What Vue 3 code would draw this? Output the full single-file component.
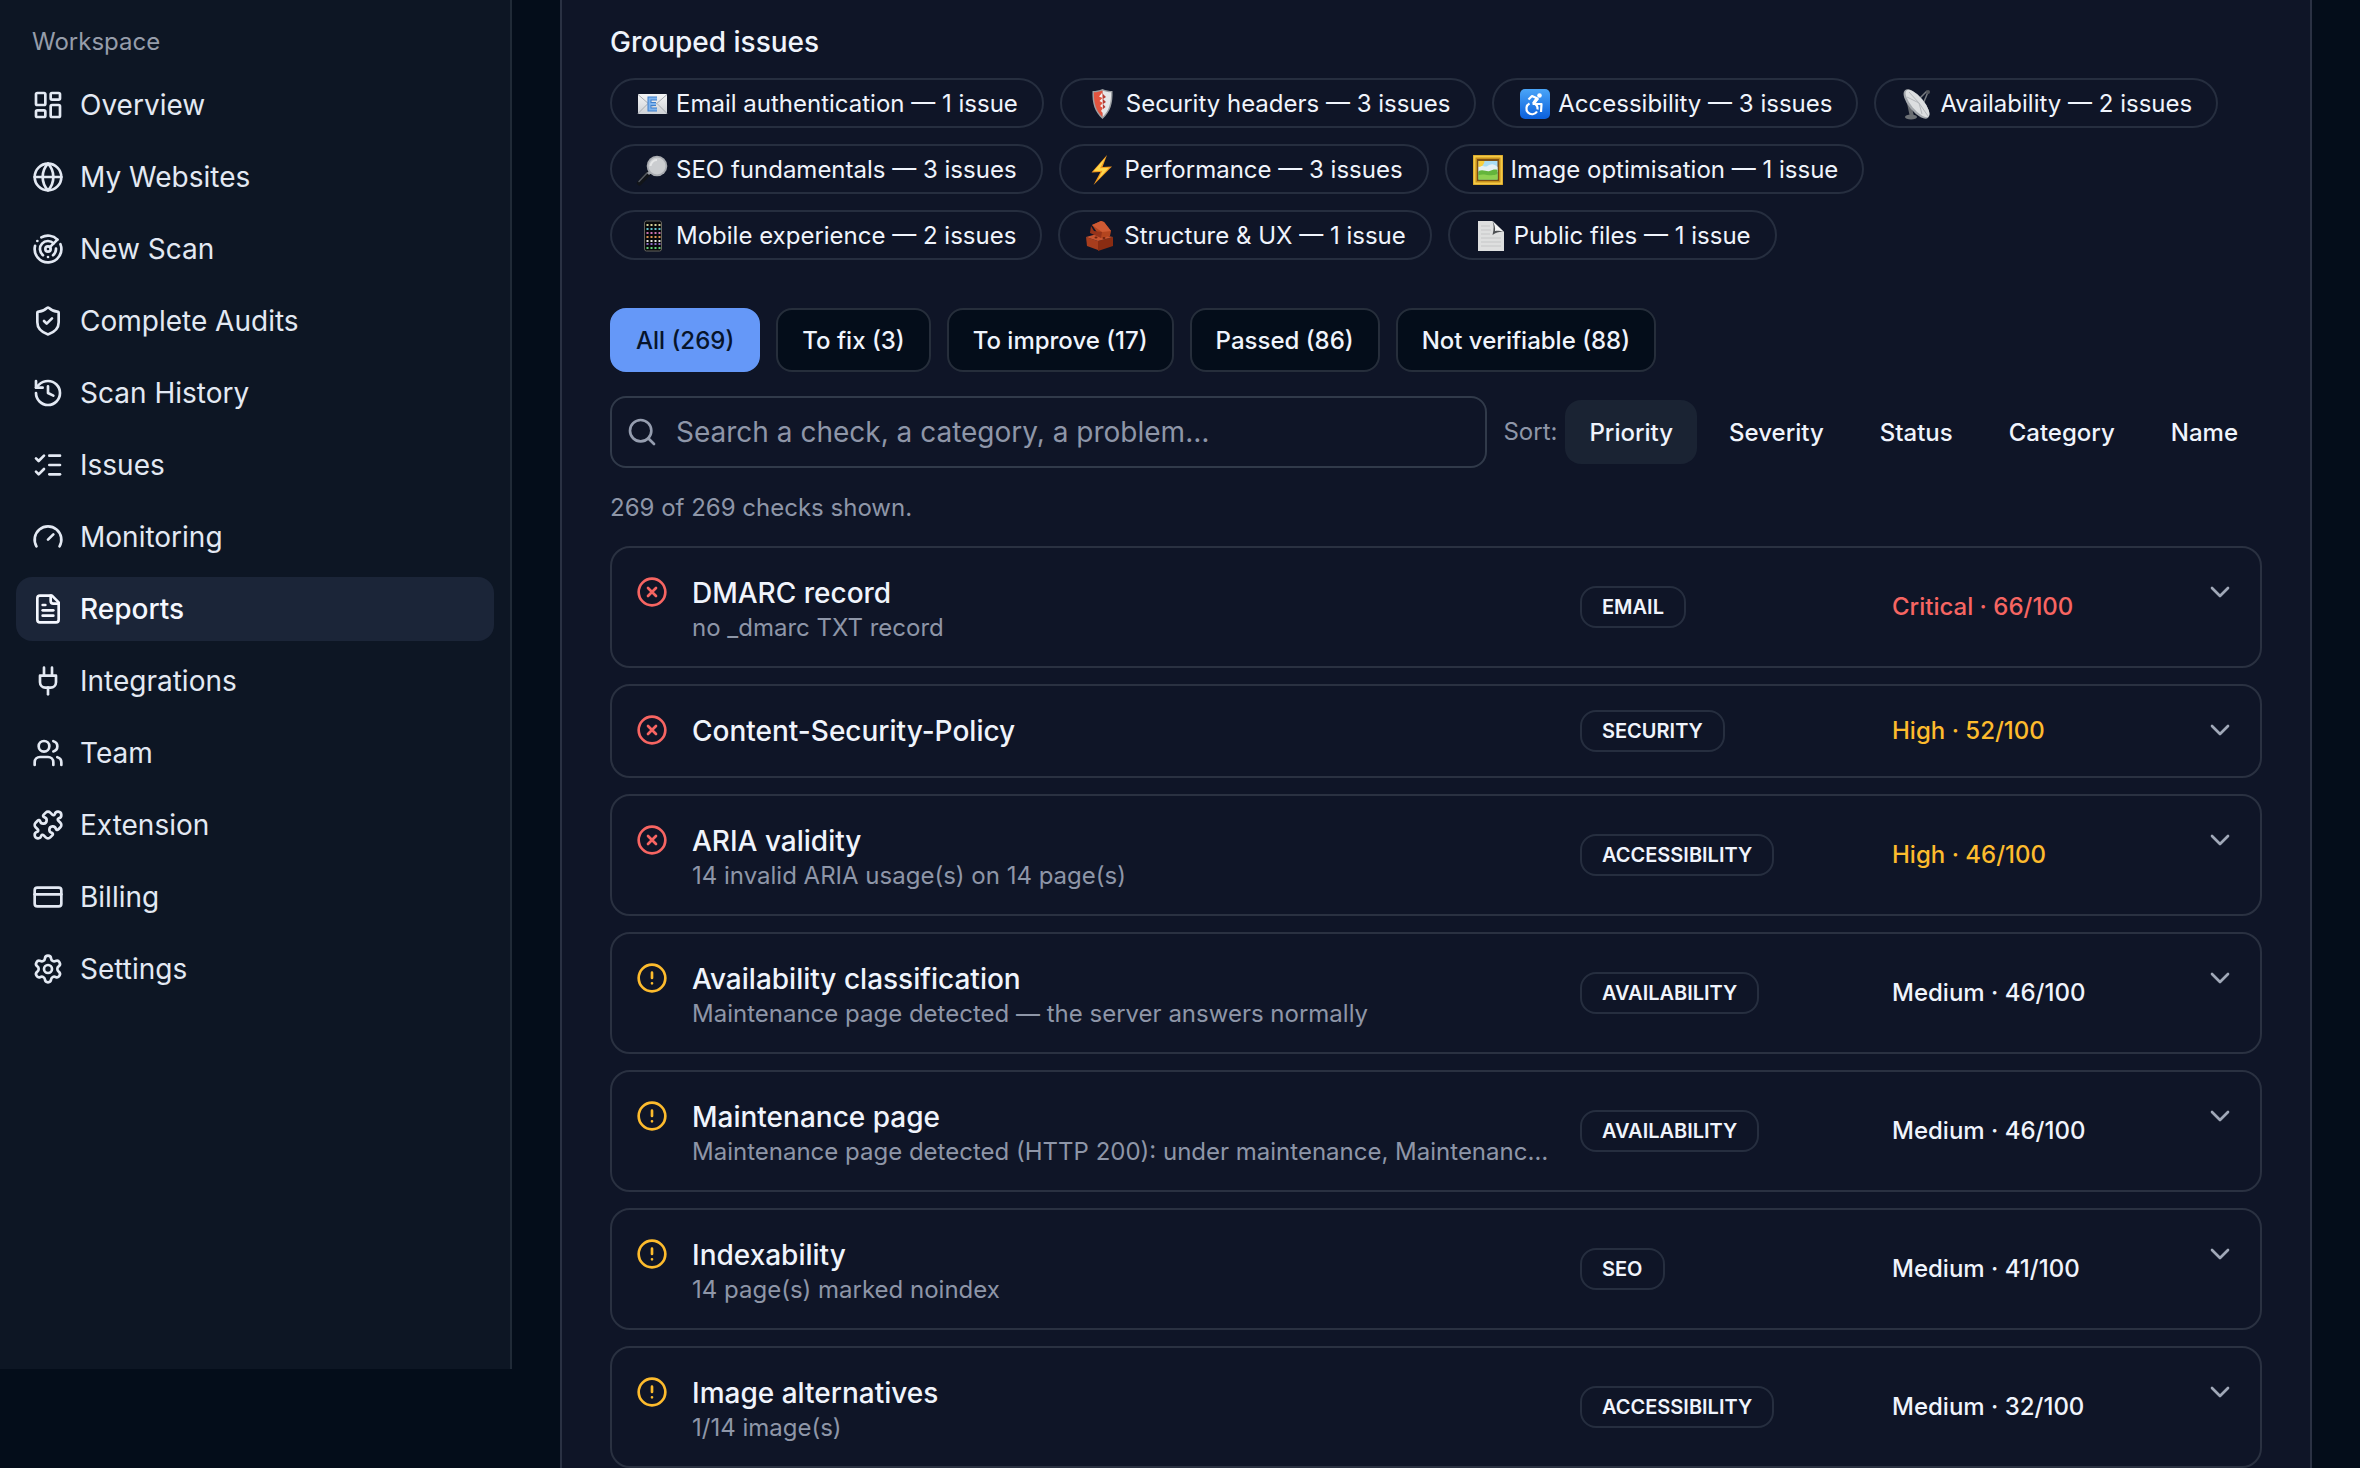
<script setup>
import { ref } from 'vue'

const navItems = [
  { label: 'Overview', shapes: '<rect width="7" height="9" x="3" y="3" rx="1"/><rect width="7" height="5" x="14" y="3" rx="1"/><rect width="7" height="9" x="14" y="12" rx="1"/><rect width="7" height="5" x="3" y="16" rx="1"/>' },
  { label: 'My Websites', shapes: '<circle cx="12" cy="12" r="10"/><path d="M12 2a14.5 14.5 0 0 0 0 20 14.5 14.5 0 0 0 0-20"/><path d="M2 12h20"/>' },
  { label: 'New Scan', shapes: '<path d="M19.07 4.93A10 10 0 0 0 6.99 3.34"/><path d="M4 6h.01"/><path d="M2.29 9.62A10 10 0 1 0 21.31 8.35"/><path d="M16.24 7.76A6 6 0 1 0 8.23 16.67"/><path d="M12 18h.01"/><path d="M17.99 11.66A6 6 0 0 1 15.77 16.67"/><circle cx="12" cy="12" r="2"/><path d="m13.41 10.59 5.66-5.66"/>' },
  { label: 'Complete Audits', shapes: '<path d="M20 13c0 5-3.5 7.5-7.66 8.95a1 1 0 0 1-.67-.01C7.5 20.5 4 18 4 13V6a1 1 0 0 1 1-1c2 0 4.5-1.2 6.24-2.72a1.17 1.17 0 0 1 1.52 0C14.51 3.81 17 5 19 5a1 1 0 0 1 1 1z"/><path d="m9 12 2 2 4-4"/>' },
  { label: 'Scan History', shapes: '<path d="M3 12a9 9 0 1 0 9-9 9.75 9.75 0 0 0-6.74 2.74L3 8"/><path d="M3 3v5h5"/><path d="M12 7v5l4 2"/>' },
  { label: 'Issues', shapes: '<path d="M13 5h8"/><path d="M13 12h8"/><path d="M13 19h8"/><path d="m3 17 2 2 4-4"/><path d="m3 7 2 2 4-4"/>' },
  { label: 'Monitoring', shapes: '<path d="m12 14 4-4"/><path d="M3.34 19a10 10 0 1 1 17.32 0"/>' },
  { label: 'Reports', active: true, shapes: '<path d="M15 2H6a2 2 0 0 0-2 2v16a2 2 0 0 0 2 2h12a2 2 0 0 0 2-2V7Z"/><path d="M14 2v4a2 2 0 0 0 2 2h4"/><path d="M10 9H8"/><path d="M16 13H8"/><path d="M16 17H8"/>' },
  { label: 'Integrations', shapes: '<path d="M12 22v-5"/><path d="M9 8V2"/><path d="M15 8V2"/><path d="M18 8v5a4 4 0 0 1-4 4h-4a4 4 0 0 1-4-4V8Z"/>' },
  { label: 'Team', shapes: '<path d="M16 21v-2a4 4 0 0 0-4-4H6a4 4 0 0 0-4 4v2"/><circle cx="9" cy="7" r="4"/><path d="M22 21v-2a4 4 0 0 0-3-3.87"/><path d="M16 3.13a4 4 0 0 1 0 7.75"/>' },
  { label: 'Extension', shapes: '<path d="M15.39 4.39a1 1 0 0 0 1.68-.474 2.5 2.5 0 1 1 3.014 3.015 1 1 0 0 0-.474 1.68l1.683 1.682a2.414 2.414 0 0 1 0 3.414L19.61 15.39a1 1 0 0 1-1.68-.474 2.5 2.5 0 1 0-3.014 3.015 1 1 0 0 1 .474 1.68l-1.683 1.682a2.414 2.414 0 0 1-3.414 0L8.61 19.61a1 1 0 0 0-1.68.474 2.5 2.5 0 1 1-3.014-3.015 1 1 0 0 0 .474-1.68l-1.683-1.682a2.414 2.414 0 0 1 0-3.414L4.39 8.61a1 1 0 0 1 1.68.474 2.5 2.5 0 1 0 3.014-3.015 1 1 0 0 1-.474-1.68l1.683-1.682a2.414 2.414 0 0 1 3.414 0z"/>' },
  { label: 'Billing', shapes: '<rect width="20" height="14" x="2" y="5" rx="2"/><path d="M2 10h20"/>' },
  { label: 'Settings', shapes: '<path d="M9.671 4.136a2.34 2.34 0 0 1 4.659 0 2.34 2.34 0 0 0 3.319 1.915 2.34 2.34 0 0 1 2.33 4.033 2.34 2.34 0 0 0 0 3.831 2.34 2.34 0 0 1-2.33 4.033 2.34 2.34 0 0 0-3.319 1.915 2.34 2.34 0 0 1-4.659 0 2.34 2.34 0 0 0-3.32-1.915 2.34 2.34 0 0 1-2.33-4.033 2.34 2.34 0 0 0 0-3.831A2.34 2.34 0 0 1 6.35 6.051a2.34 2.34 0 0 0 3.319-1.915"/><circle cx="12" cy="12" r="3"/>' }
]

const groups = [
  { label: 'Email authentication — 1 issue', art: '<defs><linearGradient id="env" x2="0" y2="1"><stop stop-color="#f4f5f6"/><stop offset="1" stop-color="#cfd2d6"/></linearGradient></defs><rect x="2" y="6" width="29" height="20" rx="1" fill="url(#env)"/><path d="M2 6.500 14 17q2.500 2 5 0L31 6.500M2 25.500l10-10M31 25.500l-10-10" fill="none" stroke="#a9adb3"/><path d="M21 10.500h-7.500v11H21M13.500 16H20" fill="none" stroke="#3f7fcb" stroke-width="4"/><path d="M21 10.500h-7.500v11H21M13.500 16H20" fill="none" stroke="#7fb4ee" stroke-width="2"/>' },
  { label: 'Security headers — 3 issues', art: '<path d="M16.500 1c3.500 1.500 6.500 2 10 2 .5 12-2 21-10 28C8.500 24 6 15 6.500 3c3.500 0 6.500-.5 10-2z" fill="#9b9ea2"/><path d="M16.500 2.500c3 1.200 5.500 1.700 8.600 1.800.2 10.500-2 18.500-8.600 24.700z" fill="#e6e7e9"/><path d="M16.500 2.500c-3 1.200-5.500 1.700-8.600 1.800-.2 10.500 2 18.500 8.600 24.700z" fill="#e2543f"/><path d="m16 5-3 3.500 3.500 1.500-3 3 3.500 2-3 3 3 2-2 3 2 2z" fill="#f3f3f4"/><path d="m17 6 3 3-3 2 3 3-3 2 2.500 3-2.500 2z" fill="#b83a31"/>' },
  { label: 'Accessibility — 3 issues', art: '<defs><linearGradient id="acc" x2="0" y2="1"><stop stop-color="#4aa5f8"/><stop offset="1" stop-color="#0a5fdb"/></linearGradient></defs><rect x="2" y="1" width="30" height="30" rx="5" fill="url(#acc)"/><circle cx="21.500" cy="7.500" r="2.300" fill="#fff"/><g fill="none" stroke="#fff" stroke-width="2.200" stroke-linejoin="round"><path d="M10.500 11.500 14 8l5.500 2.500-4 5.500h8l-.5 8"/><path d="M11.500 15.500a5.700 5.700 0 1 0 7.500 8"/><path d="M16 15.500a5.700 5.700 0 0 1 3.500 6"/></g><path d="m18 9 3 2-4 5-3-1z" fill="#fff"/>' },
  { label: 'Availability — 2 issues', art: '<path d="m18 12 9-9M23 16l5-12" stroke="#777b80" stroke-width="1.500"/><circle cx="28" cy="4" r="2" fill="#54575c"/><path d="m9 15 3 14" stroke="#686b70" stroke-width="4"/><ellipse cx="11" cy="29" rx="6" ry="2.500" fill="#6c7075"/><ellipse cx="16.500" cy="16" rx="18" ry="7.500" transform="rotate(50 16.500 16)" fill="#a4a8ad"/><ellipse cx="17.500" cy="15.500" rx="17" ry="6.200" transform="rotate(50 17.500 15.500)" fill="#dcdee0"/><path d="m9 4 10 11 9 13M7 9l12 6 3 11" stroke="#b5b8bc" fill="none"/>' },
  { label: 'SEO fundamentals — 3 issues', art: '<path d="m3.500 29 9-9.500" stroke="#111419" stroke-width="5" stroke-linecap="round"/><path d="m3 27.500 8-8.500" stroke="#555960" stroke-width="1.500" stroke-linecap="round"/><path d="m12 20 3-3" stroke="#9a9da2" stroke-width="3"/><circle cx="21" cy="12" r="10.300" fill="#a9acb1"/><circle cx="21" cy="12" r="8.500" fill="#cbcdd0"/><path d="M14.500 12a6.500 6.500 0 0 1 6.500-6" stroke="#e6e7e8" stroke-width="2" fill="none"/>' },
  { label: 'Performance — 3 issues', art: '<path d="M22 1 6.500 18.500l9-.5L8.500 31 27 12.500l-9.500.5z" fill="#f49a1f"/><path d="M20.500 3.500 8.500 17.200l9-.5-5 9.500L24 13.800l-9 .4z" fill="#ffd84d"/>' },
  { label: 'Image optimisation — 1 issue', art: '<rect x="2" y="1" width="30" height="30" fill="#c8901c"/><rect x="3.500" y="2.500" width="27" height="27" fill="none" stroke="#f4ca45" stroke-width="2"/><rect x="6" y="5" width="22" height="22" fill="#7c4f12"/><rect x="7.500" y="7" width="19" height="18.500" fill="#a9dcf3"/><path d="M7.500 13c4-3 6 1 9-1s6-3 10 1v5h-19z" fill="#e6f0f2"/><path d="M7.500 7h6a6 6 0 0 1-6 6z" fill="#f9cf3b"/><path d="M7.500 17c5-2 8 1 11 0s5-2 8-1v9.500h-19z" fill="#64b53c"/><path d="M7.500 21c6-2 12 2 19-1v5.500h-19z" fill="#8fd152"/>' },
  { label: 'Mobile experience — 2 issues', art: '<rect x="8.500" y="1" width="17" height="30" rx="2" fill="#08090b" stroke="#65645c"/><g stroke-width="2" stroke-dasharray="2 2"><path d="M10.500 5h14" stroke="#d7d29a"/><path d="M10.500 9h14" stroke="#62c3cd"/><path d="M10.500 13h14" stroke="#cf73b4"/><path d="M10.500 17h14" stroke="#e29554"/><path d="M10.500 21h14" stroke="#e8e8df"/><path d="M10.500 24h14" stroke="#8a6cc4"/><path d="M10.500 28h14" stroke="#63d07a"/></g>' },
  { label: 'Structure & UX — 1 issue', art: '<path d="M2 17 14 21v9L3 26z" fill="#a83d1d"/><path d="m14 21 15-4v9l-15 5z" fill="#8a2c12"/><path d="m2 17 11-3 16 3-15 4z" fill="#c95530"/><path d="M8 5 17 1l3 1 7 9-1 5-9 2z" fill="#b4451f"/><path d="m8 5 9-4 3 1 7 9-9 1z" fill="#cf5a33"/><path d="m7 6 3 5 8 1-1 6-11-5z" fill="#96331a"/><ellipse cx="12" cy="17.500" rx="1.500" ry="1" fill="#6d220e"/><ellipse cx="20" cy="18" rx="1.500" ry="1" fill="#6d220e"/>' },
  { label: 'Public files — 1 issue', art: '<path d="M4 1h14.500L30 12v19H4z" fill="#dedfdf"/><path d="M18.500 1c1.500 4 1.500 8 0 14 4-3 8-3.500 11.500-3z" fill="#4e5154"/><path d="M18.500 1 30 12c-4-1.500-7-1.500-9-1 .5-3-.5-7-2.500-10z" fill="#f5f5f5"/><path d="M7 6h9M7 10h10M7 14h9M7 18h20M7 22h20M7 26h20" stroke="#c5c6c7"/>' }
]

const filters = ['All (269)', 'To fix (3)', 'To improve (17)', 'Passed (86)', 'Not verifiable (88)']
const sorts = ['Priority', 'Severity', 'Status', 'Category', 'Name']

const checks = [
  { title: 'DMARC record', note: 'no _dmarc TXT record', category: 'Email', level: 'critical', score: 'Critical · 66/100', failed: true },
  { title: 'Content-Security-Policy', note: '', category: 'Security', level: 'high', score: 'High · 52/100', failed: true },
  { title: 'ARIA validity', note: '14 invalid ARIA usage(s) on 14 page(s)', category: 'Accessibility', level: 'high', score: 'High · 46/100', failed: true },
  { title: 'Availability classification', note: 'Maintenance page detected — the server answers normally', category: 'Availability', level: 'medium', score: 'Medium · 46/100' },
  { title: 'Maintenance page', note: 'Maintenance page detected (HTTP 200): under maintenance, Maintenanc…', category: 'Availability', level: 'medium', score: 'Medium · 46/100' },
  { title: 'Indexability', note: '14 page(s) marked noindex', category: 'SEO', level: 'medium', score: 'Medium · 41/100' },
  { title: 'Image alternatives', note: '1/14 image(s)', category: 'Accessibility', level: 'medium', score: 'Medium · 32/100' }
]

const activeFilter = ref('All (269)')
const activeSort = ref('Priority')
const query = ref('')
</script>

<template>
  <div class="app">
    <aside class="sidebar">
      <p class="sidebar-title">Workspace</p>
      <nav class="nav">
        <a v-for="item in navItems" :key="item.label" href="#" class="nav-link" :class="{ active: item.active }">
          <svg class="icon" viewBox="0 0 24 24" aria-hidden="true" v-html="item.shapes"></svg>
          {{ item.label }}
        </a>
      </nav>
    </aside>

    <main class="main">
      <section class="panel">
        <h2 class="heading">Grouped issues</h2>
        <ul class="groups">
          <li v-for="group in groups" :key="group.label" class="group">
            <svg class="emoji" viewBox="0 0 32 32" aria-hidden="true" v-html="group.art"></svg>
            {{ group.label }}
          </li>
        </ul>

        <div class="filters">
          <button
            v-for="name in filters"
            :key="name"
            type="button"
            class="filter"
            :class="{ active: name === activeFilter }"
            @click="activeFilter = name"
          >{{ name }}</button>
        </div>

        <div class="toolbar">
          <label class="search">
            <svg class="icon" viewBox="0 0 24 24" aria-hidden="true"><path d="m21 21-4.340-4.340" /><circle cx="11" cy="11" r="8" /></svg>
            <input v-model="query" type="text" aria-label="Search checks" placeholder="Search a check, a category, a problem…" />
          </label>
          <div class="sorts">
            <span class="sort-label">Sort:</span>
            <button
              v-for="name in sorts"
              :key="name"
              type="button"
              class="sort"
              :class="{ active: name === activeSort }"
              @click="activeSort = name"
            >{{ name }}</button>
          </div>
        </div>

        <p class="count">269 of 269 checks shown.</p>

        <div class="checks">
          <button v-for="check in checks" :key="check.title" type="button" class="check">
            <svg class="icon state" :class="{ failed: check.failed }" viewBox="0 0 24 24" aria-hidden="true">
              <circle cx="12" cy="12" r="10" />
              <path v-if="check.failed" d="m15 9-6 6M9 9l6 6" />
              <path v-else d="M12 8v4M12 16h.01" />
            </svg>
            <span class="details">
              <span class="text">
                <span class="title">{{ check.title }}</span>
                <span v-if="check.note" class="note">{{ check.note }}</span>
              </span>
              <span><span class="badge">{{ check.category }}</span></span>
              <span class="score" :class="check.level">{{ check.score }}</span>
            </span>
            <svg class="icon chevron" viewBox="0 0 24 24" aria-hidden="true"><path d="m6 9 6 6 6-6" /></svg>
          </button>
        </div>
      </section>
    </main>
  </div>
</template>

<style>
body {
  margin: 0;
  background: #040d1a;
}
</style>

<style scoped>
.app {
  display: flex;
  align-items: flex-start;
  min-height: 100vh;
  color: #f0f4fc;
  font-family: Inter, "Liberation Sans", sans-serif;
  font-size: 24px;
  line-height: 32px;
}

button,
input {
  color: inherit;
  font: inherit;
}

.icon {
  flex: none;
  width: 32px;
  height: 32px;
  fill: none;
  stroke: currentColor;
  stroke-width: 2;
  stroke-linecap: round;
  stroke-linejoin: round;
}

.sidebar {
  box-sizing: border-box;
  flex: none;
  width: 512px;
  height: calc(100vh - 99px);
  padding: 16px;
  border-right: 2px solid #202a37;
  background: #0d1624;
}

.sidebar-title {
  margin: 0;
  padding: 10px 16px 15px;
  color: #969daa;
}

.nav {
  display: flex;
  flex-direction: column;
  gap: 8px;
}

.nav-link {
  display: flex;
  align-items: center;
  gap: 16px;
  height: 64px;
  padding: 0 16px;
  border-radius: 16px;
  color: #e3e9f3;
  font-size: 28px;
  text-decoration: none;
}

.nav-link.active {
  background: #1b2538;
  color: #f5f8ff;
  font-weight: 500;
}

.main {
  flex: 1;
  min-width: 0;
  padding: 0 48px;
}

.panel {
  box-sizing: border-box;
  min-height: 100vh;
  padding: 22px 48px 0;
  border: solid #2a3143;
  border-width: 0 2px;
  background: #0f1527;
}

.heading {
  margin: 0;
  font-size: 28px;
  font-weight: 500;
  line-height: 40px;
}

.groups {
  display: flex;
  flex-wrap: wrap;
  gap: 16px;
  margin: 16px 0 0;
  padding: 0;
  list-style: none;
}

.group {
  box-sizing: border-box;
  display: flex;
  align-items: center;
  gap: 8px;
  height: 50px;
  padding: 2px 24px 0;
  border: 2px solid #262e3f;
  border-radius: 25px;
}

.emoji {
  width: 32px;
  height: 32px;
}

.filters {
  display: flex;
  flex-wrap: wrap;
  gap: 16px;
  margin-top: 48px;
}

.filter,
.sort {
  height: 64px;
  padding: 2px 24px 0;
  border: 2px solid #262e3b;
  border-radius: 16px;
  background: #040d1a;
  font-weight: 500;
}

.filter.active {
  border-color: #6598f8;
  background: #6598f8;
  color: #07142b;
}

.toolbar {
  display: flex;
  align-items: center;
  gap: 16px;
  margin-top: 24px;
}

.search {
  box-sizing: border-box;
  display: flex;
  flex: 1;
  align-items: center;
  gap: 18px;
  min-width: 0;
  height: 72px;
  padding: 0 14px;
  border: 2px solid #313a4a;
  border-radius: 16px;
  color: #959daf;
}

.search input {
  flex: 1;
  min-width: 0;
  padding: 0;
  border: 0;
  outline: 0;
  background: none;
  font-size: 28px;
}

.search input::placeholder {
  color: #8e96a8;
  opacity: 1;
}

.sorts {
  display: flex;
  align-items: center;
  gap: 8px;
}

.sort-label {
  color: #8e96a8;
}

.sort {
  border: 0;
  background: none;
}

.sort.active {
  background: #1a2333;
}

.count {
  margin: 24px 0 22px;
  color: #8e96a8;
}

.checks {
  display: flex;
  flex-direction: column;
  gap: 16px;
}

.check {
  display: flex;
  align-items: flex-start;
  gap: 24px;
  padding: 24px;
  border: 2px solid #2a3141;
  border-radius: 20px;
  background: none;
  text-align: left;
}

.state,
.chevron {
  margin-top: 4px;
}

.state {
  color: #fdbb2d;
}

.state.failed {
  color: #f76562;
}

.chevron {
  color: #a0a8b8;
}

.details {
  display: grid;
  flex: 1;
  grid-template-columns: minmax(0, 3fr) minmax(0, 1fr) minmax(0, 1fr);
  align-items: center;
  gap: 24px;
  min-width: 0;
}

.text {
  display: flex;
  flex-direction: column;
}

.title {
  font-size: 28px;
  font-weight: 500;
  line-height: 42px;
}

.note {
  overflow: hidden;
  color: #8e96a8;
  line-height: 28px;
  text-overflow: ellipsis;
  white-space: nowrap;
}

.badge {
  display: block;
  width: fit-content;
  padding: 3px 20px;
  border: 2px solid #262e3f;
  border-radius: 16px;
  font-size: 20px;
  font-weight: 600;
  text-transform: uppercase;
}

.score {
  font-weight: 500;
}

.critical {
  color: #f76562;
}

.high {
  color: #fdbb2d;
}
</style>
